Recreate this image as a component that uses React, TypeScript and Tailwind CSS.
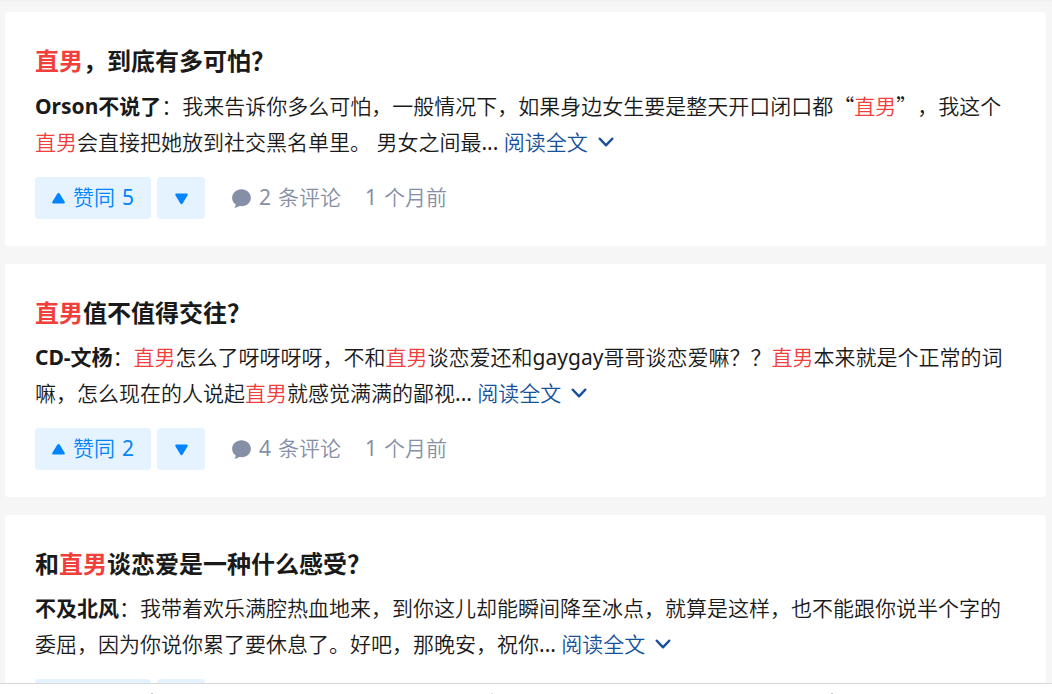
import React from "react";

type Part = { text: string; kind?: "hit" | "quote" | "latin" };

type Answer = {
  title: Part[];
  author: string;
  excerpt: Part[];
  votes: number;
  comments: number;
  months: number;
};

const answers: Answer[] = [
  {
    title: [{ text: "直男", kind: "hit" }, { text: "，到底有多可怕？" }],
    author: "Orson不说了",
    excerpt: [
      { text: "我来告诉你多么可怕，一般情况下，如果身边女生要是整天开口闭口都" },
      { text: "“", kind: "quote" },
      { text: "直男", kind: "hit" },
      { text: "”", kind: "quote" },
      { text: "，我这个" },
      { text: "直男", kind: "hit" },
      { text: "会直接把她放到社交黑名单里。 男女之间最" },
    ],
    votes: 5,
    comments: 2,
    months: 1,
  },
  {
    title: [{ text: "直男", kind: "hit" }, { text: "值不值得交往？" }],
    author: "CD-文杨",
    excerpt: [
      { text: "直男", kind: "hit" },
      { text: "怎么了呀呀呀呀，不和" },
      { text: "直男", kind: "hit" },
      { text: "谈恋爱还和" },
      { text: "gaygay", kind: "latin" },
      { text: "哥哥谈恋爱嘛？？" },
      { text: "直男", kind: "hit" },
      { text: "本来就是个正常的词嘛，怎么现在的人说起" },
      { text: "直男", kind: "hit" },
      { text: "就感觉满满的鄙视" },
    ],
    votes: 2,
    comments: 4,
    months: 1,
  },
  {
    title: [{ text: "和" }, { text: "直男", kind: "hit" }, { text: "谈恋爱是一种什么感受？" }],
    author: "不及北风",
    excerpt: [
      {
        text: "我带着欢乐满腔热血地来，到你这儿却能瞬间降至冰点，就算是这样，也不能跟你说半个字的委屈，因为你说你累了要休息了。好吧，那晚安，祝你",
      },
    ],
    votes: 3,
    comments: 1,
    months: 1,
  },
];

function Rich({ parts }: { parts: Part[] }) {
  return (
    <>
      {parts.map((part, i) => {
        if (part.kind === "hit") {
          return (
            <em key={i} className="text-[#f1403c] not-italic">
              {part.text}
            </em>
          );
        }
        if (part.kind === "quote") {
          return (
            <span key={i} className="font-['Noto_Sans_CJK_SC',sans-serif]">
              {part.text}
            </span>
          );
        }
        if (part.kind === "latin") {
          return (
            <span key={i} className="font-normal">
              {part.text}
            </span>
          );
        }
        return <React.Fragment key={i}>{part.text}</React.Fragment>;
      })}
    </>
  );
}

function Triangle({ down = false }: { down?: boolean }) {
  return (
    <svg
      viewBox="0 0 24 24"
      className={down ? "size-[15px] rotate-180" : "size-[15px]"}
      fill="currentColor"
      aria-hidden="true"
    >
      <path d="M2 18.242c0-.326.088-.532.237-.896l7.98-13.203C10.572 3.57 11.086 3 12 3c.915 0 1.429.571 1.784 1.143l7.98 13.203c.15.364.236.57.236.896 0 1.386-.875 1.9-1.955 1.9H3.955c-1.08 0-1.955-.517-1.955-1.9z" />
    </svg>
  );
}

function CommentIcon() {
  return (
    <svg viewBox="0 0 24 24" className="size-[25px]" fill="currentColor" aria-hidden="true">
      <path d="M10.241 19.313a.97.97 0 0 0-.77.2 7.908 7.908 0 0 1-3.772 1.482.409.409 0 0 1-.38-.637 5.825 5.825 0 0 0 1.11-2.237.605.605 0 0 0-.227-.59A7.935 7.935 0 0 1 3 11.25C3 6.7 7.03 3 12 3s9 3.7 9 8.25-4.373 9.108-10.759 8.063z" />
    </svg>
  );
}

function ChevronDown() {
  return (
    <svg viewBox="0 0 24 24" className="size-9" fill="currentColor" aria-hidden="true">
      <path d="M12 13L8.285 9.218a.758.758 0 0 0-1.064 0 .738.738 0 0 0 0 1.052l4.249 4.512a.758.758 0 0 0 1.064 0l4.246-4.512a.738.738 0 0 0 0-1.052.757.757 0 0 0-1.063 0L12.002 13z" />
    </svg>
  );
}

function AnswerCard({ answer }: { answer: Answer }) {
  return (
    <article className="rounded-[3px] bg-white px-[30px] pt-[31px] pb-[27px]">
      <h2 className="text-2xl leading-9 font-bold">
        <a href="#">
          <Rich parts={answer.title} />
        </a>
      </h2>
      <p className="mt-2 leading-9">
        <b className="font-bold">{answer.author}</b>：<Rich parts={answer.excerpt} />
        <span className="font-normal">... </span>
        <button type="button" className="inline-flex h-9 items-center align-top text-[#175199]">
          阅读全文
          <ChevronDown />
        </button>
      </p>
      <div className="mt-[17px] flex items-center text-[#8590a6]">
        <button
          type="button"
          className="flex h-[42px] min-w-[116px] items-center gap-[7px] rounded-[4px] bg-[#e5f2ff] px-4 text-[#0084ff]"
        >
          <Triangle />
          <span>赞同</span>
          <span className="font-normal">{answer.votes}</span>
        </button>
        <button
          type="button"
          aria-label="反对"
          className="ml-1.5 flex h-[42px] w-12 items-center justify-center rounded-[4px] bg-[#e5f2ff] text-[#0084ff]"
        >
          <Triangle down />
        </button>
        <button type="button" className="ml-6 flex items-center gap-[5px]">
          <CommentIcon />
          <span className="flex gap-[7px]">
            <span className="font-normal">{answer.comments}</span>
            <span>条评论</span>
          </span>
        </button>
        <span className="ml-6 flex gap-[7px]">
          <span className="font-normal">{answer.months}</span>
          <span>个月前</span>
        </span>
      </div>
    </article>
  );
}

export default function App() {
  return (
    <div className="flex h-screen flex-col bg-[#f6f6f6] font-['Noto_Sans','Noto_Sans_CJK_SC',sans-serif] text-[21px] font-[350] text-[#1a1a1a] [text-spacing-trim:space-all]">
      <main className="flex min-h-0 flex-1 flex-col gap-[18px] overflow-hidden pt-3 pr-1.5 pl-[5px] shadow-[inset_0_2px_2px_-1px_#ececec] *:shrink-0">
        {answers.map((answer) => (
          <AnswerCard key={answer.author} answer={answer} />
        ))}
      </main>
      <footer className="flex h-[11px] shrink-0 items-end gap-[338px] border-t border-[#d8d8d8] bg-white pl-[151px]">
        <span className="h-px w-0.5 bg-[#c4c4c4]" />
        <span className="h-px w-0.5 bg-[#dddddd]" />
        <span className="h-px w-0.5 bg-[#c4c4c4]" />
      </footer>
    </div>
  );
}
